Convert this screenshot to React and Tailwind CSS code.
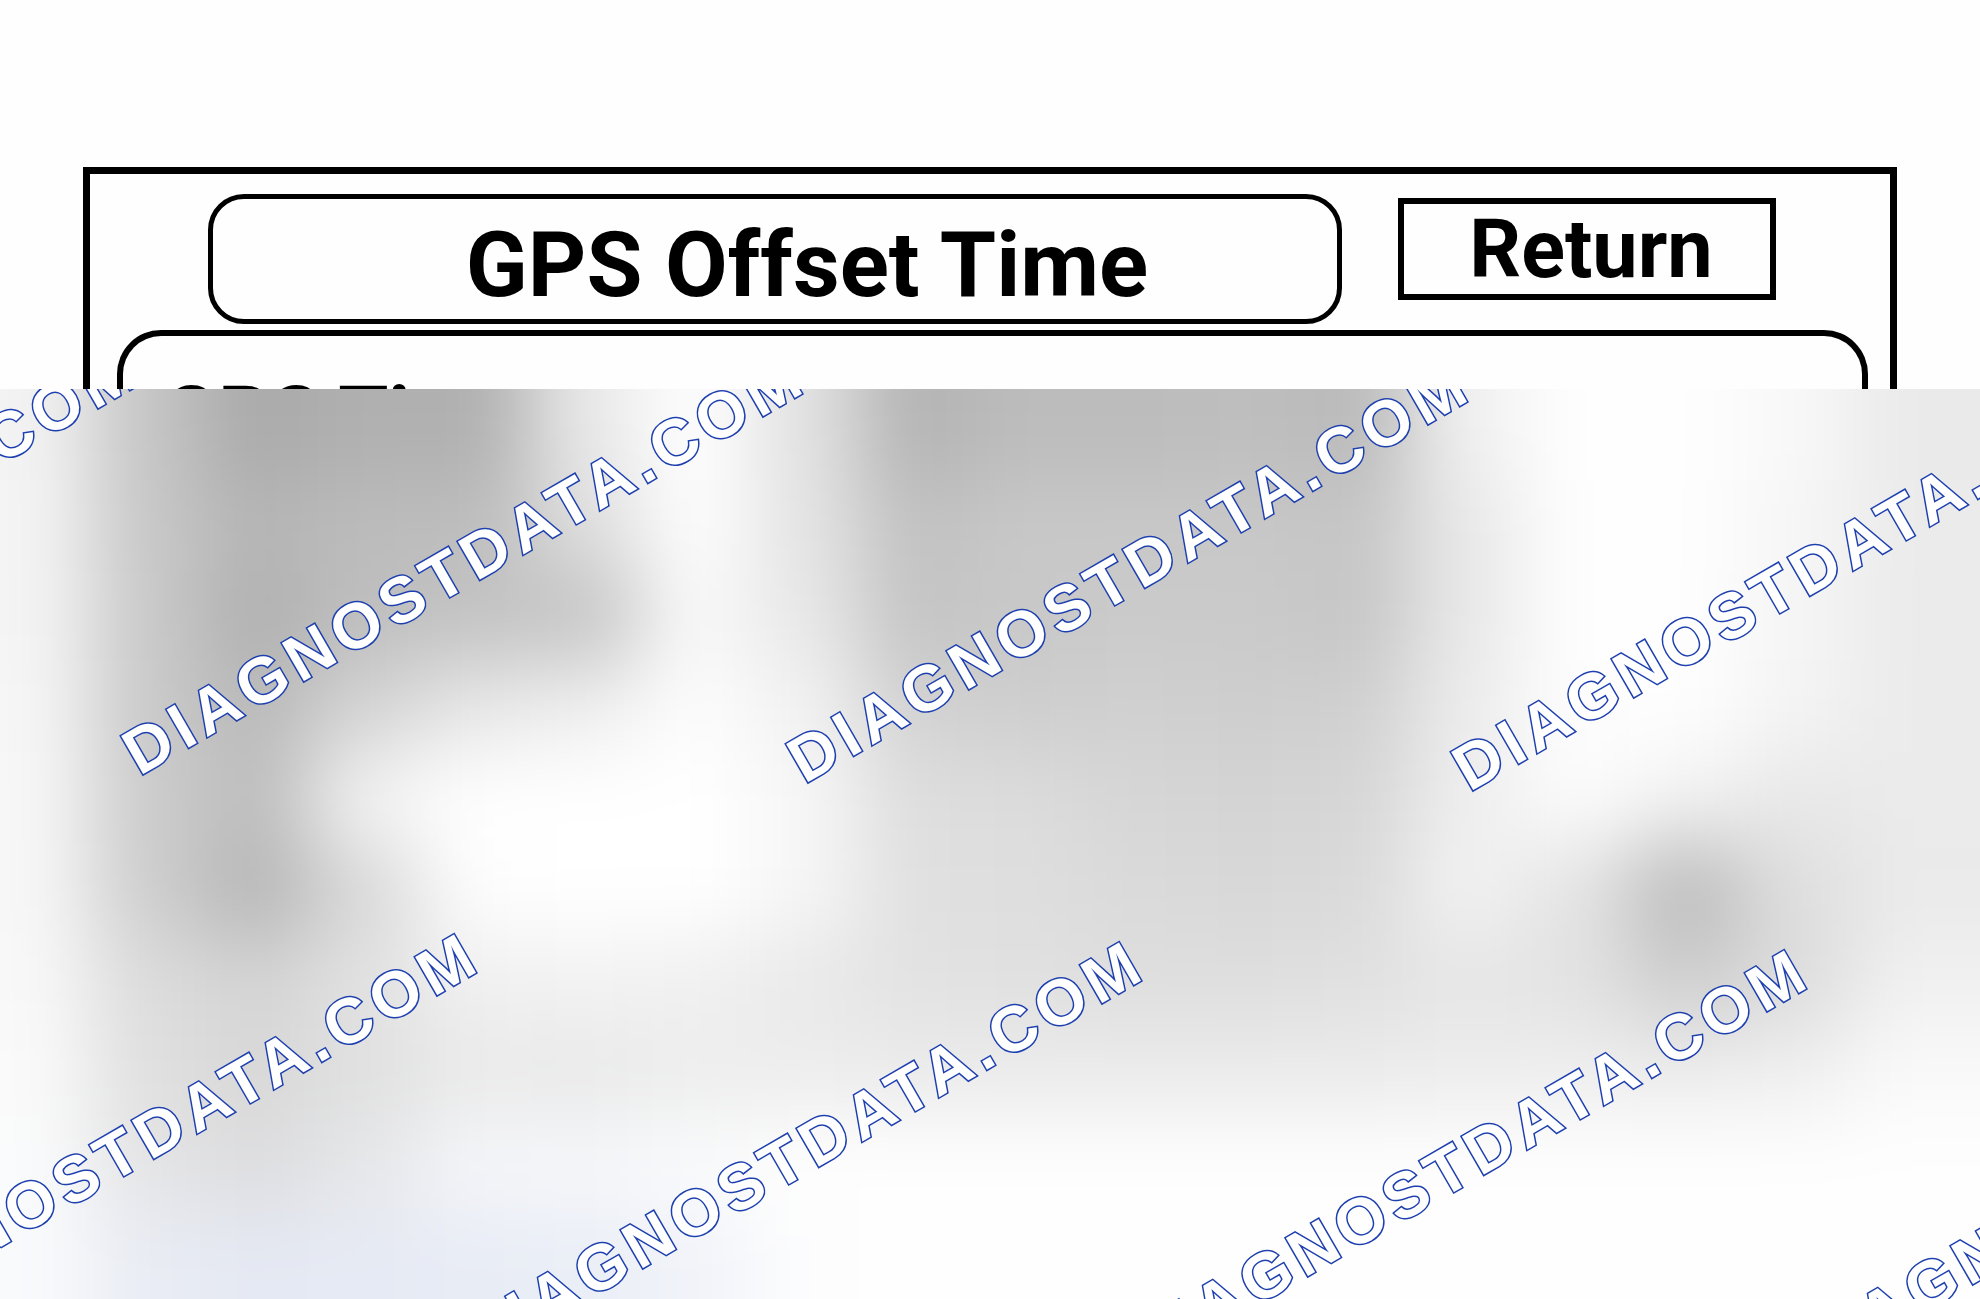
/**
 * App.jsx
 *
 * GPS offset time screen from the navigation diagnostics. Only the top strip
 * is readable, everything under it is a blurred preview with the site name
 * stamped across it.
 */

// coarse colour map of the preview, one array per row, blurred when drawn
const PREVIEW = [
  ['f3f3f3', 'c6c6c6', 'aaaaaa', 'b0b0b0', 'b0b0b0', 'e8e8e8', 'fefefe', 'e2e2e2', 'b4b4b4', 'bcbcbc', 'bcbcbc', 'bebebe', 'bababa', 'f0f0f0', 'fefefe', 'fefefe', 'f8f8f8', 'eaeaea'],
  ['f4f4f4', 'c8c8c8', 'b6b6b6', 'bcbcbc', 'bebebe', 'dedede', 'fdfdfd', 'e4e4e4', 'c2c2c2', 'c8c8c8', 'c8c8c8', 'c8c8c8', 'c6c6c6', 'e8e8e8', 'fefefe', 'fefefe', 'f6f6f6', 'ebebeb'],
  ['f4f4f4', 'cacaca', 'b0b0b0', 'bebebe', 'c2c2c2', 'c4c4c4', 'f8f8f8', 'e8e8e8', 'c4c4c4', 'c8c8c8', 'cacaca', 'cacaca', 'c6c6c6', 'e8e8e8', 'fefefe', 'fefefe', 'f5f5f5', 'ebebeb'],
  ['f6f6f6', 'cacaca', 'bababa', 'd4d4d4', 'e8e8e8', 'efefef', 'fcfcfc', 'f2f2f2', 'd2d2d2', 'cecece', 'd0d0d0', 'cecece', 'd0d0d0', 'ececec', 'fdfdfd', 'fefefe', 'f4f4f4', 'ebebeb'],
  ['f7f7f7', 'cccccc', 'bebebe', 'f4f4f4', 'ffffff', 'ffffff', 'ffffff', 'f6f6f6', 'dedede', 'dcdcdc', 'd6d6d6', 'd4d4d4', 'd6d6d6', 'eeeeee', 'fcfcfc', 'f2f2f2', 'e8e8e8', 'ebebeb'],
  ['f7f7f7', 'cecece', 'b6b6b6', 'd8d8d8', 'fdfdfd', 'ffffff', 'ffffff', 'f6f6f6', 'e0e0e0', 'dedede', 'dadada', 'd8d8d8', 'dadada', 'f2f2f2', 'e4e4e4', 'bababa', 'dedede', 'eaeaea'],
  ['f8f8f8', 'dcdcdc', 'd4d4d4', 'e2e2e2', 'f0f0f0', 'f2f2f2', 'f0f0f0', 'e9e9e9', 'e2e2e2', 'e0e0e0', 'dedede', 'dedede', 'e0e0e0', 'e6e6e6', 'e2e2e2', 'cecece', 'dcdcdc', 'f0f0f0'],
  ['fafafa', 'e0e0e0', 'd8d8d8', 'e0e0e0', 'eaeaea', 'e9e9e9', 'ededed', 'ededed', 'ebebeb', 'ebebeb', 'ebebeb', 'ebebeb', 'ebebeb', 'ededed', 'eeeeee', 'ededed', 'efefef', 'f9f9f9'],
  ['fafbfc', 'e4e4e5', 'dddddf', 'e6e7e9', 'f5f6f9', 'f6f7fa', 'fafbfc', 'fefefe', 'fefefe', 'fefefe', 'fefefe', 'fefefe', 'fefefe', 'fefefe', 'fefefe', 'fefefe', 'fefefe', 'fefefe'],
  ['f9fafc', 'e9ecf4', 'e5e9f3', 'e6eaf4', 'e8ecf5', 'eaeef6', 'f1f3f9', 'fdfdfe', 'fefefe', 'fefefe', 'fefefe', 'fefefe', 'fefefe', 'fefefe', 'fefefe', 'fefefe', 'fefefe', 'fefefe'],
]

const COLS = PREVIEW[0].length
const ROWS = PREVIEW.length
const CELL_W = 110
const CELL_H = 91

// baseline start of every stamp, measured from the preview's top left corner
const STAMPS = [
  { x: -525, y: 380 },
  { x: 140, y: 388 },
  { x: 805, y: 396 },
  { x: 1470, y: 404 },
  { x: -186, y: 967 },
  { x: 479, y: 975 },
  { x: 1144, y: 983 },
  { x: 1809, y: 991 },
]

const clamp = (n, max) => Math.min(Math.max(n, 0), max)

function BlurredPreview() {
  // extra rings of cells so the blur does not fade out at the edges
  const cells = []
  for (let r = -2; r < ROWS + 2; r++) {
    for (let c = -2; c < COLS + 2; c++) {
      cells.push({ r, c, fill: `#${PREVIEW[clamp(r, ROWS - 1)][clamp(c, COLS - 1)]}` })
    }
  }

  return (
    <svg
      viewBox={`20 0 ${COLS * CELL_W} ${ROWS * CELL_H}`}
      preserveAspectRatio="none"
      className="absolute inset-0 w-full h-full"
      aria-hidden="true"
    >
      <defs>
        <filter id="soften" filterUnits="userSpaceOnUse" x="-220" y="-182" width="2420" height="1274" colorInterpolationFilters="sRGB">
          <feGaussianBlur stdDeviation="40"/>
        </filter>
      </defs>
      <g filter="url(#soften)" shapeRendering="crispEdges">
        {cells.map(({ r, c, fill }) => (
          <rect
            key={`${r}:${c}`}
            x={c * CELL_W}
            y={r * CELL_H}
            width={CELL_W}
            height={CELL_H}
            fill={fill}
          />
        ))}
      </g>
    </svg>
  )
}

// outlined site name, drawn uphill from its bottom left corner
function Stamp({ x, y }) {
  return (
    <span
      style={{ left: x, bottom: `calc(100% - ${y}px)` }}
      className="absolute origin-bottom-left -rotate-30 whitespace-nowrap
                 text-[64px] leading-[46px] font-bold tracking-widest text-white
                 [-webkit-text-stroke:3px_#1e40af] [paint-order:stroke_fill]"
    >
      DIAGNOSTDATA.COM
    </span>
  )
}

export default function App() {
  return (
    <main className="min-h-screen flex flex-col bg-[#fefefe] text-black font-['Liberation_Sans',Arial,sans-serif]">

      {/* readable strip of the screen */}
      <div className="mt-[167px] mx-[83px] border-7 border-b-0 border-black font-['Roboto',sans-serif] font-bold">
        <header className="flex items-start gap-14 pt-5 pb-1.5 pl-[118px] pr-[114px]">
          <h1 className="flex-1 h-[130px] flex items-center justify-center pt-3 pl-16
                         border-5 border-black rounded-[36px] text-[91px] leading-none whitespace-nowrap">
            GPS Offset Time
          </h1>
          <button
            type="button"
            className="mt-1 w-[378px] h-[102px] flex items-center justify-center pl-2
                       border-6 border-black text-[81px] leading-none"
          >
            Return
          </button>
        </header>

        {/* first row of the panel, cut off by the preview below */}
        <section className="h-[59px] ml-[27px] mr-[22px] pt-10 pl-10 overflow-hidden
                            border-6 border-b-0 border-black rounded-t-[44px]">
          <h2 className="text-[81px] leading-none">GPS Time</h2>
        </section>
      </div>

      <section className="relative flex-1 overflow-hidden">
        <BlurredPreview/>
        {STAMPS.map((s) => (
          <Stamp key={`${s.x}:${s.y}`} x={s.x} y={s.y}/>
        ))}
      </section>

    </main>
  )
}
